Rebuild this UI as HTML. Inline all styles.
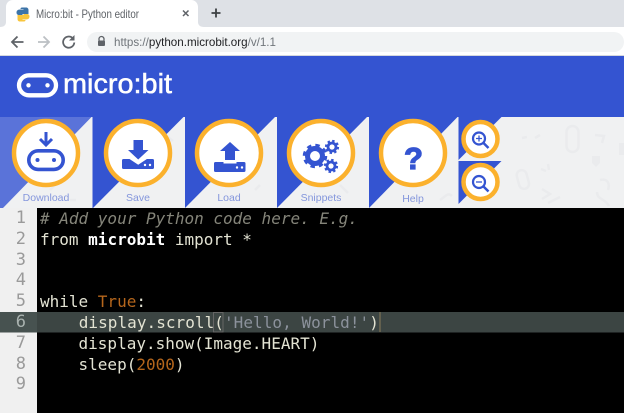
<!DOCTYPE html>
<html><head><meta charset="utf-8"><style>
html,body{margin:0;padding:0;background:#000}
#w{position:relative;width:624px;height:413px;overflow:hidden;background:#000;filter:blur(.3px)}
svg{position:absolute;left:0;top:0}
.b{fill:#3454d1}.g{fill:#f0f1f2}
.r{fill:#fff;stroke:#fbb12d;stroke-width:4.500}
.l{font:10.500px "Liberation Sans",sans-serif;fill:#8496dc;text-anchor:middle}
.d{fill:#eaebed;stroke:none}
.ds{fill:none;stroke:#eaebed;stroke-width:2.500}
.n{position:absolute;left:0;width:26px;text-align:right;font:17px/21px "DejaVu Sans Mono",monospace;color:#9a9a9a}
.c{position:absolute;left:40px;white-space:pre;font:16px/21px "DejaVu Sans Mono",monospace;color:#e3e3d3}
</style></head><body><div id="w">
<svg width="624" height="413" viewBox="0 0 624 413">
<rect width="624" height="27" fill="#dee1e6"/>
<path d="M0 27C4 27 6 25 6 22V7C6 3 9 0 13 0H191C195 0 198 3 198 7V22C198 25 200 27 204 27Z" fill="#fff"/>
<rect y="27" width="624" height="29" fill="#fff"/>
<rect x="87" y="32" width="537" height="20" rx="10" fill="#f1f3f4"/>
<path d="M22 7.500h4c1.500 0 2.500 1 2.500 2.500V14h-6v1h-3.500c-1.500 0-2.500-1-2.500-2.500S17.500 9.500 20 9.500h3.500V9h-3C20.500 8 21 7.500 22 7.500Z" fill="#3d74a8"/>
<path d="M24 21.500h-4c-1.500 0-2.500-1-2.500-2.500V15h6v-1h3.500c1.500 0 2.500 1 2.500 2.500S28.500 19.500 26 19.500h-3.500v.5h3C25.500 21 25 21.500 24 21.500Z" fill="#f8c53c"/>
<text x="36" y="18" font-family="Liberation Sans,sans-serif" font-size="12" fill="#5f6368" textLength="103" lengthAdjust="spacingAndGlyphs">Micro:bit - Python editor</text>
<path d="M183 10.500l5.500 5.500M188.500 10.500l-5.500 5.500" stroke="#5f6368" stroke-width="1.500"/>
<path d="M216 8.500v9M211.500 13h9" stroke="#3c4043" stroke-width="1.800"/>
<path d="M23.500 42H12.500M17.500 36.500L12 42l5.500 5.500" fill="none" stroke="#5f6368" stroke-width="1.800"/>
<path d="M38 42h10.500M43.500 36.500L49 42 43.500 47.500" fill="none" stroke="#bcc0c4" stroke-width="1.800"/>
<path d="M72.500 38A5.600 5.600 0 1 0 74.300 42.500" fill="none" stroke="#5f6368" stroke-width="1.800"/><path d="M74.500 35v5.500H69Z" fill="#5f6368"/>
<path d="M99 40.500v-1.500a2.500 2.500 0 0 1 5 0v1.500" fill="none" stroke="#5f6368" stroke-width="1.300"/><rect x="98" y="40.500" width="7" height="5.500" rx="1" fill="#5f6368"/>
<text x="114" y="46" font-family="Liberation Sans,sans-serif" font-size="12" fill="#70757a" textLength="162" lengthAdjust="spacingAndGlyphs">https://<tspan fill="#202124">python.microbit.org</tspan>/v/1.1</text>
<rect y="55" width="624" height="1" fill="#d5d8de"/>
<rect y="56" width="624" height="61" class="b"/>
<rect x="19" y="75.300" width="37" height="20" rx="10" fill="none" stroke="#fff" stroke-width="4.300"/>
<circle cx="28.500" cy="85.300" r="2.200" fill="#fff"/><circle cx="47.500" cy="85.300" r="2.200" fill="#fff"/>
<text x="63" y="93" font-family="Liberation Sans,sans-serif" font-size="28" fill="#fff" stroke="#fff" stroke-width=".5" textLength="109" lengthAdjust="spacingAndGlyphs">micro:bit</text>
<rect y="117" width="624" height="91" class="g"/>
<g>
<rect x="566.500" y="126" width="12" height="26" rx="6" class="ds"/><rect x="518" y="170" width="10" height="19" rx="5" transform="rotate(-15 523 180)" class="ds"/>
<path d="M522 138l5-1M535 138l5-3M595 135l9 1-2 7M548 203l12-6M600 180c8-2 10 4 8 10M597 192c0 8 8 6 12 14M542 189l8 5-8 5M548 164l1 6M541 169l5 2" class="ds"/>
<path d="M592 156h8v7l-4 4-4-4Z" class="d"/><rect x="619" y="143" width="6" height="12" class="d"/>
<path d="M440 200c6-4 8-8 12-4M240 130l6 6M340 185l8 8M420 125c8 6 6 14 0 20M50 190l8-8M165 135l8 6M70 200h6M255 190l5-5" class="ds"/>
</g>
<path d="M0 117H91.500L3 208H0Z" fill="#5a73d9"/>
<path d="M92.500 117V208H93L183.500 117Z" class="b"/>
<path d="M185 117V208L275 117Z" class="b"/>
<path d="M277 117V208L367 117Z" class="b"/>
<path d="M369 117V208L457.500 117Z" class="b"/>
<path d="M458.500 117H501.500L458.500 160Z" class="b"/>
<path d="M458.500 161H501.500L458.500 204Z" class="b"/>
<circle cx="46" cy="153" r="32" class="r"/><circle cx="138" cy="153" r="32" class="r"/><circle cx="229" cy="153" r="32" class="r"/><circle cx="321" cy="153" r="32" class="r"/><circle cx="413" cy="153" r="32" class="r"/>
<circle cx="480.500" cy="139" r="17" class="r"/><circle cx="480.500" cy="182" r="17" class="r"/>
<path d="M46 132v13M40 139l6 6 6-6" fill="none" stroke="#3454d1" stroke-width="3"/>
<rect x="28.800" y="150.800" width="34.400" height="18.600" rx="9.300" fill="none" stroke="#3454d1" stroke-width="3.600"/>
<circle cx="37.500" cy="160" r="2" fill="#3454d1"/><circle cx="54" cy="160" r="2" fill="#3454d1"/>
<path d="M133.500 140h9.500v10h5.500l-10.300 9.500L128 150h5.500Z" class="b"/>
<path d="M123.500 159h6l8.700 5.800 8.700-5.800h5.600a1.500 1.500 0 0 1 1.500 1.500V167.500a1.500 1.500 0 0 1-1.500 1.500H123.500a1.500 1.500 0 0 1-1.500-1.500V160.500A1.500 1.500 0 0 1 123.500 159Z" class="b"/>
<circle cx="145" cy="165" r="1.200" fill="#fff"/><circle cx="150" cy="165" r="1.200" fill="#fff"/>
<path d="M225 160v-9h-5l10-9 10 9h-5v9Z" class="b"/>
<path d="M215.500 162h8v1.500h13V162h7.500a1.500 1.500 0 0 1 1.500 1.500v7a1.500 1.500 0 0 1-1.500 1.500h-28.500a1.500 1.500 0 0 1-1.500-1.500v-7a1.500 1.500 0 0 1 1.500-1.500Z" class="b"/>
<circle cx="237" cy="167.500" r="1.200" fill="#fff"/><circle cx="242" cy="167.500" r="1.200" fill="#fff"/>
<circle cx="315" cy="156" r="7.500" fill="none" stroke="#3454d1" stroke-width="5"/>
<circle cx="315" cy="156" r="10.500" fill="none" stroke="#3454d1" stroke-width="3.500" stroke-dasharray="4.300 3.950"/>
<circle cx="332" cy="147" r="4" fill="none" stroke="#3454d1" stroke-width="2.800"/>
<circle cx="332" cy="147" r="6" fill="none" stroke="#3454d1" stroke-width="2.200" stroke-dasharray="2.400 2.310"/>
<circle cx="331" cy="166" r="4" fill="none" stroke="#3454d1" stroke-width="2.800"/>
<circle cx="331" cy="166" r="6" fill="none" stroke="#3454d1" stroke-width="2.200" stroke-dasharray="2.400 2.310"/>
<text x="413.500" y="169" text-anchor="middle" font-family="Liberation Sans,sans-serif" font-weight="bold" font-size="31" fill="#3454d1" stroke="#3454d1" stroke-width="1.200">?</text>
<circle cx="479" cy="138.500" r="6" fill="none" stroke="#3454d1" stroke-width="2.200"/><path d="M483.500 143l5 5" stroke="#3454d1" stroke-width="2.500"/><path d="M476 138.500h6M479 135.500v6" stroke="#3454d1" stroke-width="1.300"/>
<circle cx="479" cy="182" r="6" fill="none" stroke="#3454d1" stroke-width="2.200"/><path d="M483.500 186.500l5 5" stroke="#3454d1" stroke-width="2.500"/><path d="M476 182h6" stroke="#3454d1" stroke-width="1.300"/>
<text x="46" y="201" class="l">Download</text><text x="138" y="201" class="l">Save</text><text x="229" y="201" class="l">Load</text><text x="321" y="201" class="l">Snippets</text><text x="413" y="202" class="l">Help</text>
<rect y="208" width="37" height="205" fill="#f0f0f0"/>
<rect x="37" y="208" width="587" height="205" fill="#000"/>
<rect x="37" y="312" width="587" height="20.500" fill="#3c4543"/>
<rect y="312" width="37" height="20.500" fill="#475250"/>
<rect x="213.500" y="312.500" width="9.500" height="19.500" fill="none" stroke="#666" stroke-width="1"/>
<rect x="379.500" y="312" width="1" height="20" fill="#8a7a5a"/>
</svg>
<div class="n" style="top:208px">1</div><div class="n" style="top:229px">2</div><div class="n" style="top:250px">3</div><div class="n" style="top:270px">4</div><div class="n" style="top:291px">5</div><div class="n" style="top:312px;color:#a9b2af">6</div><div class="n" style="top:333px">7</div><div class="n" style="top:354px">8</div><div class="n" style="top:374px">9</div>
<div class="c" style="top:208px;color:#85857a;font-style:italic"># Add your Python code here. E.g.</div>
<div class="c" style="top:229px">from <b style="color:#fff">microbit</b> import *</div>
<div class="c" style="top:291px">while <span style="color:#b5661c">True</span>:</div>
<div class="c" style="top:312px;letter-spacing:.05px">    display.scroll(<span style="color:#8c929c">'Hello, World!'</span>)</div>
<div class="c" style="top:333px">    display.show(Image.HEART)</div>
<div class="c" style="top:354px">    sleep(<span style="color:#b5661c">2000</span>)</div>
</div></body></html>
